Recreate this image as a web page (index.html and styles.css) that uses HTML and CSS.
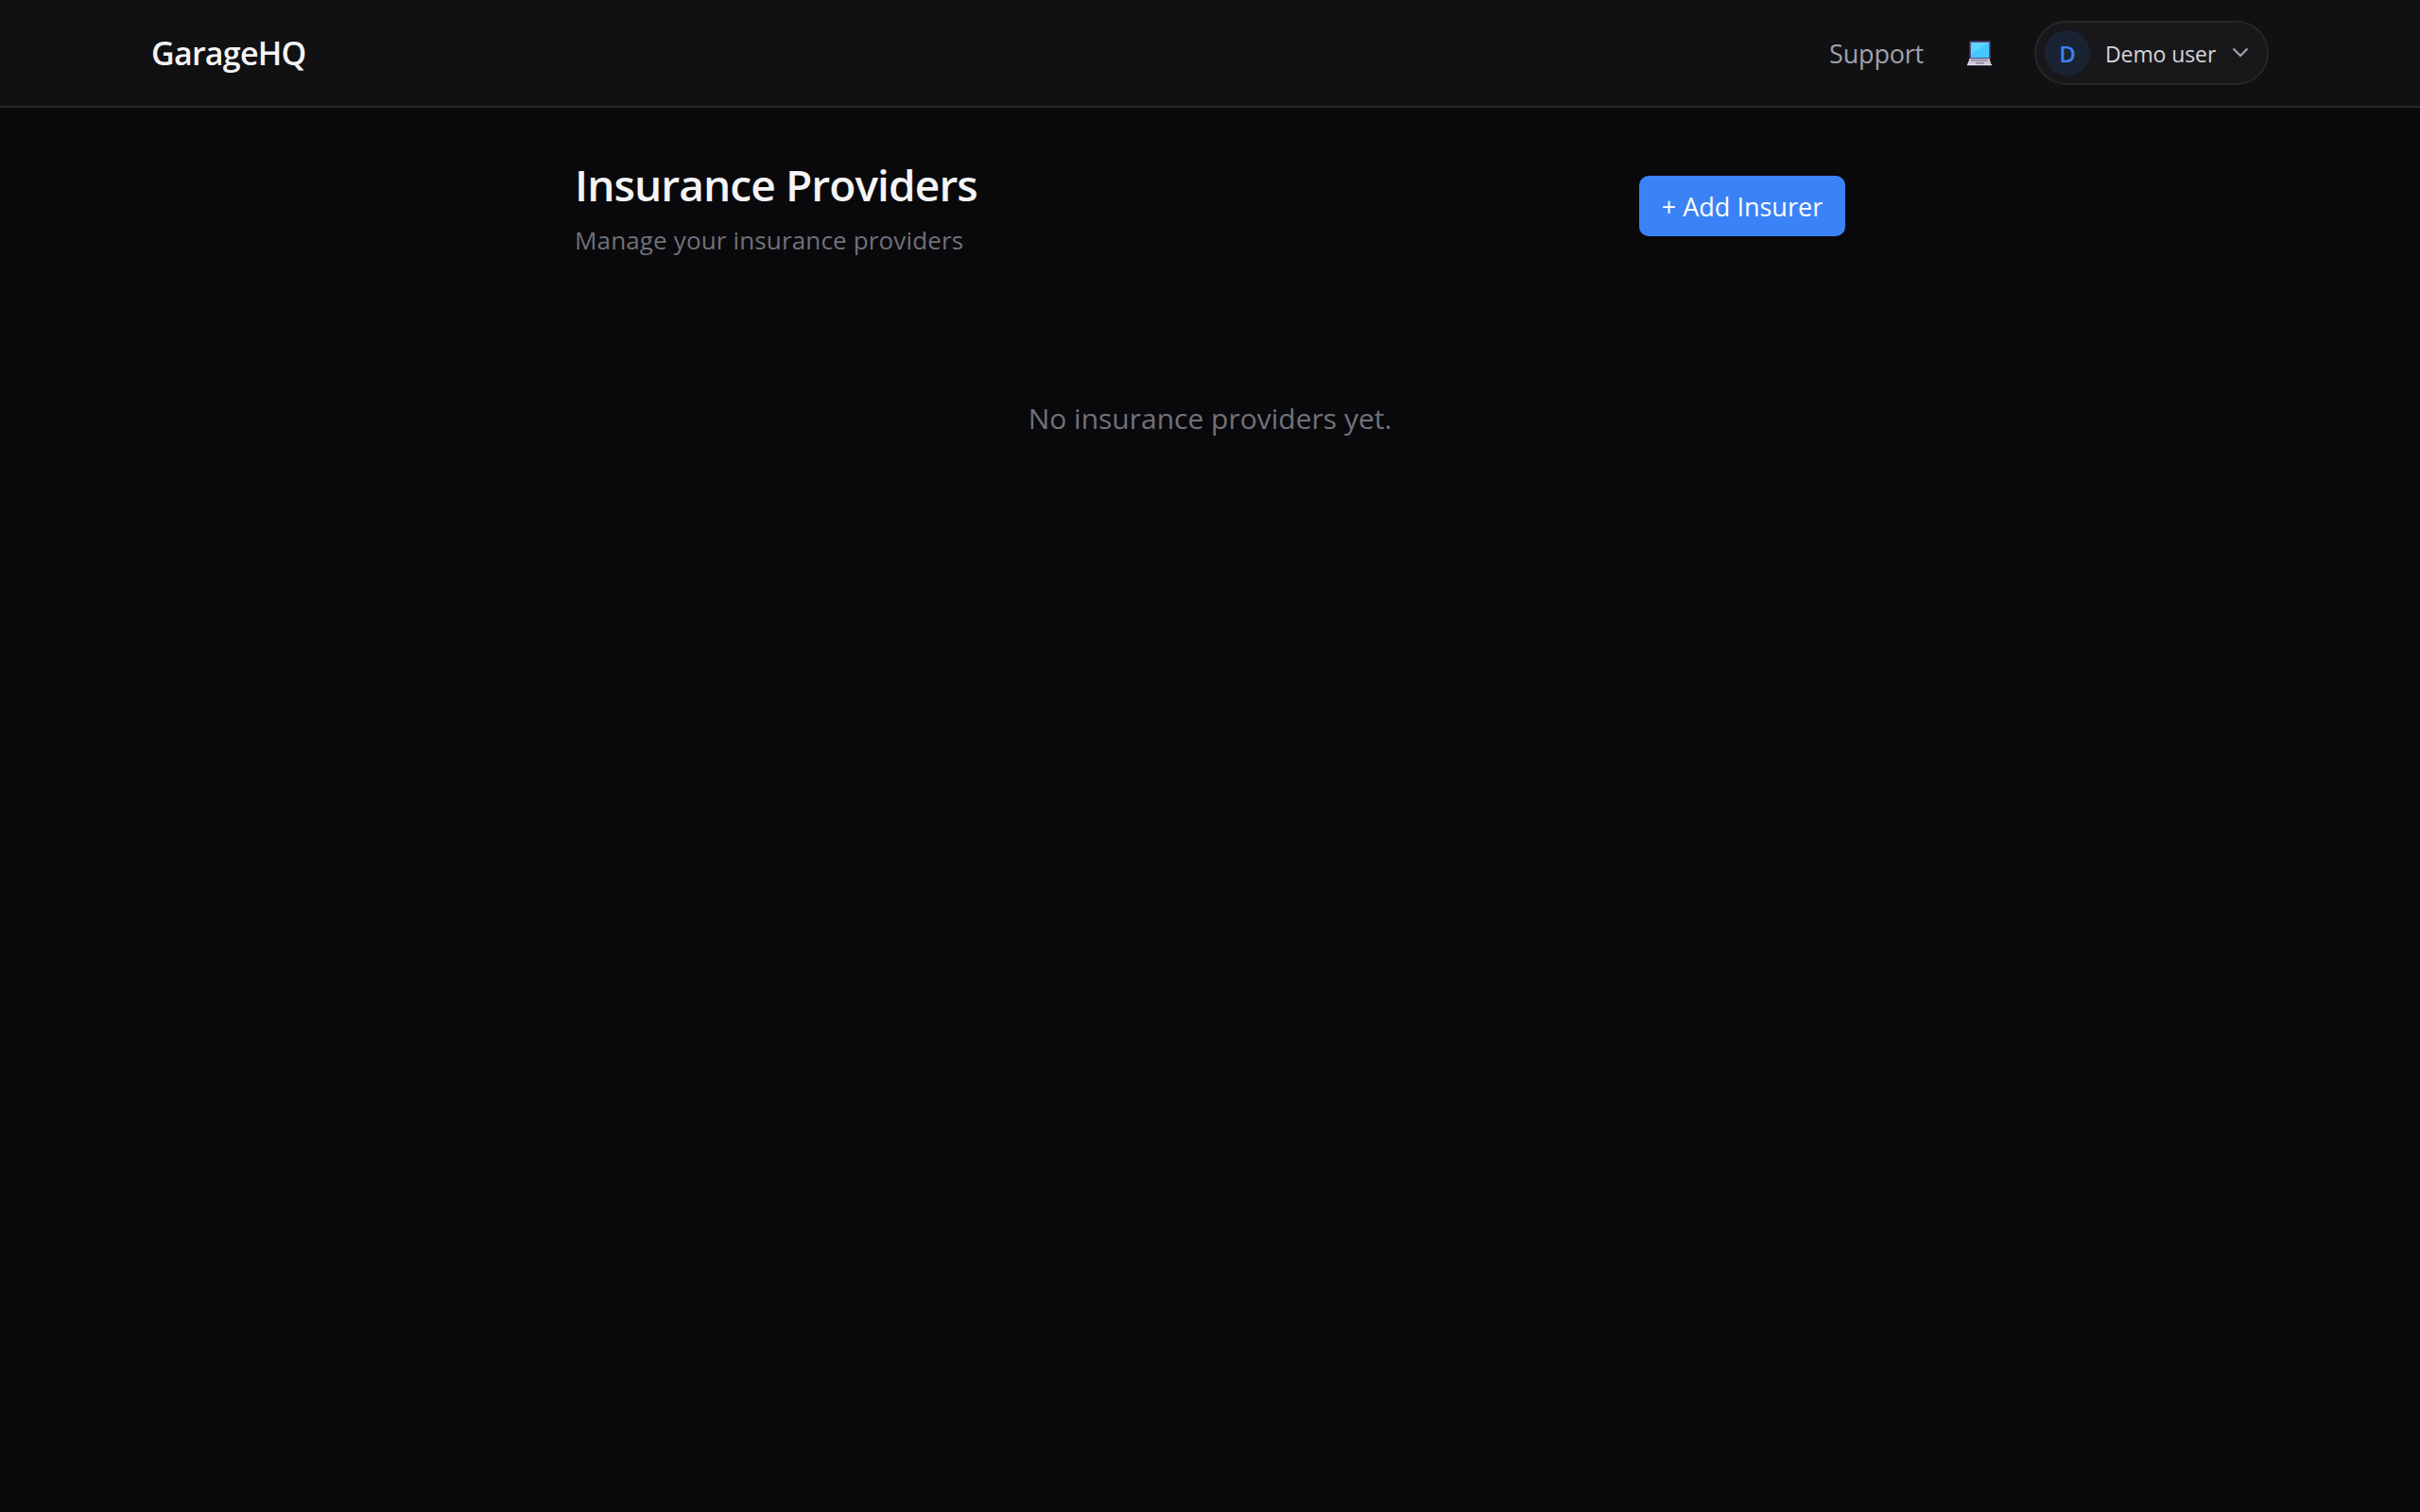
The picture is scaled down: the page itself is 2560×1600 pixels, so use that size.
FILE: index.html
```html
<!DOCTYPE html>
<html lang="en">
<head>
<meta charset="utf-8">
<title>GarageHQ</title>
<link rel="stylesheet" href="styles.css">
</head>
<body>
<header class="topbar">
  <div class="brand">GarageHQ</div>
  <nav class="nav">
    <a class="nav-link">Support</a>
    <svg class="laptop" viewBox="0 0 28 28" width="28" height="28" aria-hidden="true">
      <rect x="3.500" y="1.500" width="22" height="19" fill="#5a4f8c"/>
      <rect x="5" y="3" width="19" height="16" fill="#45c8ff"/>
      <path d="M5 3h19L5 15z" fill="#5cd6ff"/>
      <path d="M3.500 20h21l2 6.500H1z" fill="#cfc8dc"/>
      <rect x="5" y="20.500" width="18" height="2.500" fill="#9d97ad"/>
      <rect x="10" y="24" width="9" height="1.500" fill="#8a8499"/>
      <rect x="1" y="26" width="26" height="1.200" fill="#e6e1ef"/>
    </svg>
    <div class="user-pill">
      <span class="avatar">D</span>
      <span class="user-name">Demo user</span>
      <svg class="chevron" viewBox="0 0 18 12" width="18" height="12" aria-hidden="true"><path d="M1.500 1.500 9 9l7.500-7.500" fill="none" stroke="#a1a1aa" stroke-width="2.200"/></svg>
    </div>
  </nav>
</header>
<main class="content">
  <div class="page-head">
    <div>
      <h1 class="title">Insurance Providers</h1>
      <p class="subtitle">Manage your insurance providers</p>
    </div>
    <button class="add-btn">+ Add Insurer</button>
  </div>
  <p class="empty">No insurance providers yet.</p>
</main>
</body>
</html>
```
FILE: styles.css
```css
* { box-sizing: border-box; }
html, body { margin: 0; height: 100%; }
body {
  background: #09090b;
  color: #f4f4f5;
  font-family: "Open Sans", "Noto Sans", sans-serif;
  min-height: 1600px;
}
.topbar {
  height: 114px;
  background: #111113;
  border-bottom: 2px solid #27272a;
  padding: 0 160px;
  display: flex;
  align-items: center;
  justify-content: space-between;
}
.brand { font-size: 34px; font-weight: 600; letter-spacing: -0.75px; color: #f4f4f5; }
.nav { display: flex; align-items: center; gap: 44px; }
.nav-link { font-size: 27px; color: #a1a1aa; letter-spacing: -0.2px; margin-right: 1px; }
.laptop { display: block; }
.user-pill {
  display: flex;
  align-items: center;
  width: 248px;
  height: 68px;
  padding: 0 19px 0 9px;
  background: #18181b;
  border: 2px solid #27272a;
  border-radius: 34px;
}
.avatar {
  width: 48px;
  height: 48px;
  border-radius: 50%;
  background: #1a2333;
  color: #3b82f6;
  font-size: 24px;
  font-weight: 600;
  display: flex;
  align-items: center;
  justify-content: center;
  margin-right: 16px;
}
.user-name { flex: 1; font-size: 23px; line-height: 32px; padding-top: 2px; color: #d4d4d8; letter-spacing: -0.1px; }
.content { width: 1344px; margin: 0 auto; }
.page-head {
  display: flex;
  justify-content: space-between;
  align-items: flex-start;
  padding-top: 51px;
}
.title { margin: 0; font-size: 46px; font-weight: 600; line-height: 60px; letter-spacing: -0.9px; color: #f4f4f5; }
.subtitle { margin: 11px 0 0; font-size: 26px; line-height: 36px; color: #71717a; letter-spacing: 0.15px; }
.add-btn {
  width: 218px;
  height: 64px;
  margin-top: 21px;
  border: 0;
  border-radius: 10px;
  background: #3b82f6;
  color: #fff;
  font: 400 27px "Open Sans", "Noto Sans", sans-serif;
}
.empty { margin: 149px 0 0; text-align: center; font-size: 30px; line-height: 44px; color: #71717a; }
```
